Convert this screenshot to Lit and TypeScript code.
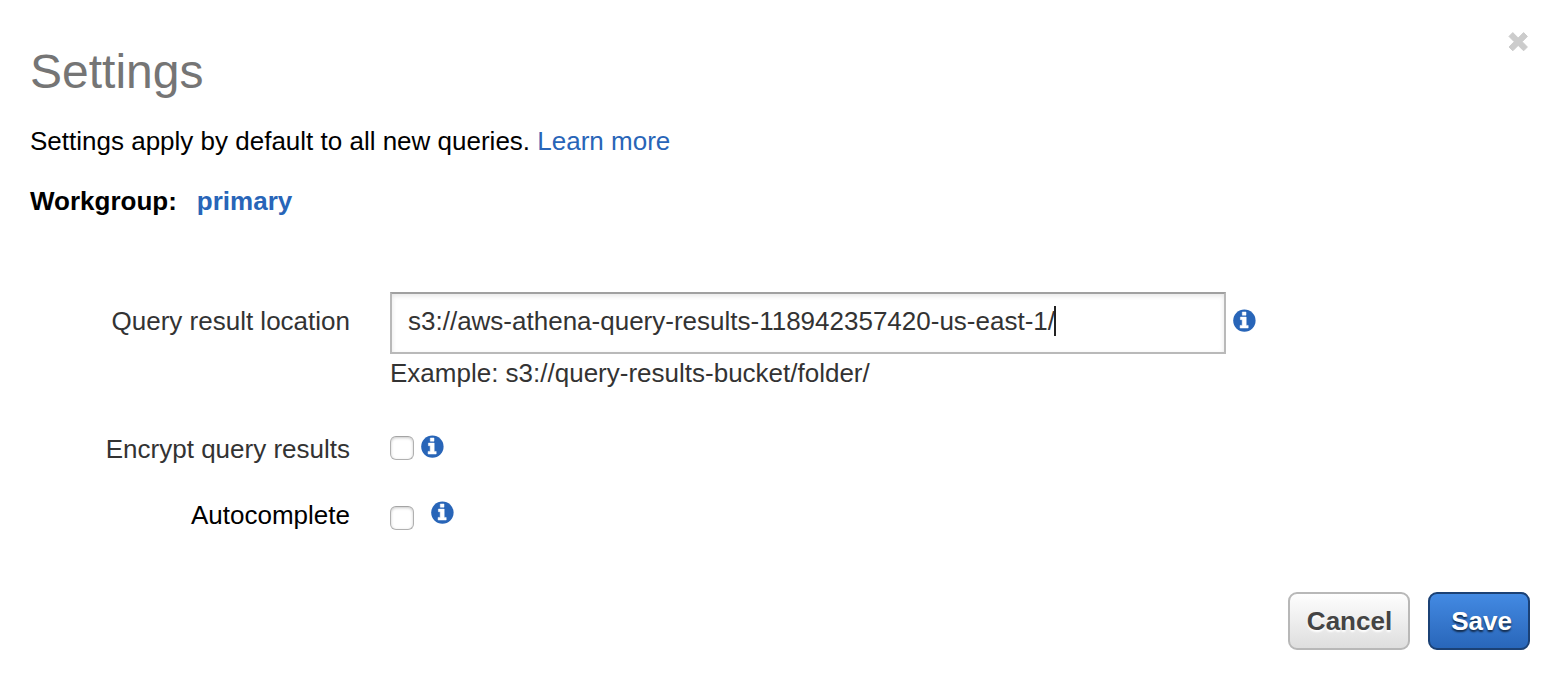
import { LitElement, html, css } from "lit";
import { customElement } from "lit/decorators.js";

@customElement("info-icon")
class InfoIcon extends LitElement {
  static styles = css`
    :host { display: block; width: 23px; height: 23px; }
    .glyph { display: block; width: 100%; height: 100%; }
    .disc { fill: #2865b8; }
    .letter { fill: #fff; stroke: #fff; stroke-width: .5; stroke-linejoin: round; }
  `;
  render() {
    return html`<svg class="glyph" viewBox="0 0 23 23">
      <circle class="disc" cx="11.4" cy="11.6" r="11.2"/>
      <path class="letter" d="M9.3 3H13V6.2H9.3ZM7.4 8.1H13.2V16.4H15.2V19H7.1V16.4H9.2V10.7H7.4Z"/>
    </svg>`;
  }
}

@customElement("app-root")
class AppRoot extends LitElement {
  static styles = css`
    :host {
      display: block;
      height: 690px;
      background: #fff;
      color: #000;
      font: 26px/30px "Liberation Sans", Arial, sans-serif;
      white-space: nowrap;
    }
    * { box-sizing: border-box; }
    .dialog { display: flex; flex-direction: column; height: 690px; padding: 32px 30px 40px; }
    .head { display: flex; justify-content: space-between; align-items: flex-start; height: 94px; }
    .title { margin: 13px 0 0; font-size: 48px; line-height: 54px; font-weight: 400; color: #757575; }
    .close { display: block; width: 20px; height: 20px; margin-right: 2px; fill: #ccc; stroke: #ccc; stroke-linejoin: round; overflow: visible; }
    .link { color: #2865b8; text-decoration: none; }
    .intro { margin: 0 0 30px; }
    .group { display: flex; gap: 20px; font-weight: 700; margin-bottom: 76px; }
    .form { display: grid; grid-template-columns: 320px 1fr; column-gap: 40px; color: #333; }
    .label { text-align: right; }
    .location-label { padding-top: 14px; }
    .location { height: 142px; }
    .line { display: flex; align-items: flex-start; }
    .input {
      display: flex; width: 836px; height: 62px; padding: 12px 16px;
      border: 2px solid #b9b9b9; border-top-color: #a0a0a0;
      box-shadow: inset 0 2px 5px rgba(0, 0, 0, .1);
    }
    .caret { width: 2px; height: 30px; margin-left: -1px; background: #222; }
    .hint { padding-top: 4px; }
    .row { height: 66px; }
    .dark { color: #000; }
    .check {
      appearance: none; width: 24px; height: 24px; margin: 2px 0 0; background: #fff;
      border: 1px solid #b0b0b0; border-top-color: #a4a4a4; border-radius: 6px;
      box-shadow: inset 0 1px 3px rgba(0, 0, 0, .22);
    }
    .low { margin-top: 6px; }
    .info-location { margin: 17px 0 0 7px; }
    .info-encrypt { margin: 1px 0 0 7px; }
    .info-auto { margin: 1px 0 0 17px; }
    .actions { display: flex; justify-content: flex-end; gap: 18px; margin-top: auto; }
    .button {
      height: 58px; padding: 0; border-radius: 9px; font: inherit; font-weight: 700;
    }
    .cancel {
      width: 122px; padding-left: 1px; color: #444; border: 2px solid #b8b8b8;
      background: linear-gradient(#fff, #ddd) border-box;
      text-shadow: 0 2px 2px #fff;
    }
    .save {
      width: 102px; padding-left: 5px; color: #fff; border: 2px solid #1b4175;
      background: linear-gradient(#448be4, #2865b8) border-box;
      text-shadow: 0 2px 2px rgba(0, 0, 0, .65);
    }
  `;
  render() {
    return html`
      <section class="dialog">
        <header class="head">
          <h1 class="title">Settings</h1>
          <svg class="close" viewBox="0 0 20 20"><path d="M4.8 .6L10.2 6L15.6 .6L19.4 4.4L14.2 9.7L19.4 15L15.6 18.8L10.2 13.4L4.8 18.8L1 15L6.2 9.7L1 4.4Z"/></svg>
        </header>
        <p class="intro">Settings apply by default to all new queries. <a class="link">Learn more</a></p>
        <div class="group"><span>Workgroup:</span><a class="link">primary</a></div>
        <div class="form">
          <div class="label location-label">Query result location</div>
          <div class="location">
            <div class="line">
              <div class="input"><span>s3://aws-athena-query-results-118942357420-us-east-1/</span><span class="caret"></span></div>
              <info-icon class="info-location"></info-icon>
            </div>
            <div class="hint">Example: s3://query-results-bucket/folder/</div>
          </div>
          <div class="label row">Encrypt query results</div>
          <div class="line row"><input class="check" type="checkbox"><info-icon class="info-encrypt"></info-icon></div>
          <div class="label row dark">Autocomplete</div>
          <div class="line row"><input class="check low" type="checkbox"><info-icon class="info-auto"></info-icon></div>
        </div>
        <footer class="actions">
          <button class="button cancel">Cancel</button>
          <button class="button save">Save</button>
        </footer>
      </section>`;
  }
}
